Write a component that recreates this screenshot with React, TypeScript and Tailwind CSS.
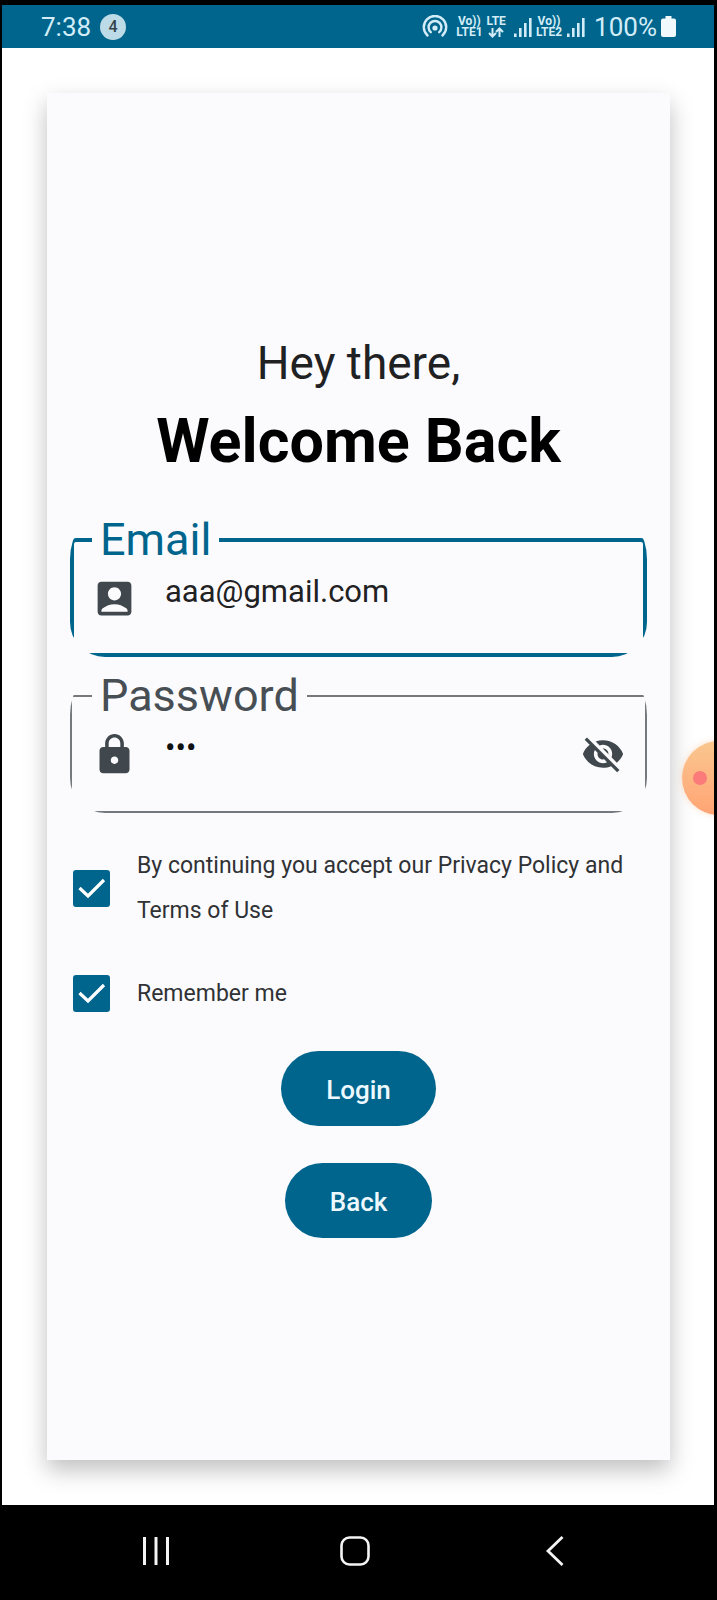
import { useState } from "react";
import type { ReactNode } from "react";

function SignalBars() {
  return (
    <svg viewBox="0 0 18 20" className="h-5 w-[18px]" fill="currentColor" aria-hidden="true">
      <rect x="0" y="16.500" width="2.600" height="3.500" />
      <rect x="5" y="11" width="2.600" height="9" />
      <rect x="10" y="6" width="2.600" height="14" />
      <rect x="15" y="1" width="2.600" height="19" />
    </svg>
  );
}

function VolteBadge({ line }: { line: string }) {
  return (
    <div className="flex flex-col items-center text-[12px] leading-[11px] font-bold">
      <span>Vo))</span>
      <span>{line}</span>
    </div>
  );
}

function StatusBar() {
  return (
    <header className="flex h-[43px] items-center justify-between bg-[#00658c] pr-[38px] pl-[39px] text-[#d3edf8]">
      <div className="flex items-center gap-[9px]">
        <span className="text-[26px] leading-8">7:38</span>
        <span className="flex size-[26px] items-center justify-center rounded-full bg-[#bddbe6] text-base font-medium text-[#33444c]">
          4
        </span>
      </div>
      <div className="flex items-center">
        <svg viewBox="0 0 26 24" className="mr-2 h-6 w-[26px]" fill="none" stroke="currentColor" strokeWidth="2.400" strokeLinecap="round" aria-hidden="true">
          <path d="M5.500 20.500A11.200 11.200 0 1 1 20.500 20.500" />
          <path d="M8.800 17.200A6.400 6.400 0 1 1 17.200 17.200" />
          <circle cx="13" cy="13" r="2.600" fill="currentColor" stroke="none" />
        </svg>
        <VolteBadge line="LTE1" />
        <div className="mr-2 ml-1 flex flex-col items-center text-[12px] leading-[11px] font-bold">
          <span>LTE</span>
          <svg viewBox="0 0 16 11" className="h-[11px] w-4" fill="none" stroke="currentColor" strokeWidth="2" aria-hidden="true">
            <path d="M4.500 1v8M1 6l3.500 3.500L8 6M11.500 10V2M8 5l3.500-3.500L15 5" />
          </svg>
        </div>
        <SignalBars />
        <div className="mr-[5px] ml-1">
          <VolteBadge line="LTE2" />
        </div>
        <SignalBars />
        <span className="ml-[9px] text-[26px] leading-8">100%</span>
        <svg viewBox="0 0 15 21" className="ml-1 h-[21px] w-[15px]" fill="#f1f9fd" aria-hidden="true">
          <path d="M4.500 0h6v2.500H13a2 2 0 0 1 2 2V19a2 2 0 0 1-2 2H2a2 2 0 0 1-2-2V4.500a2 2 0 0 1 2-2h2.500z" />
        </svg>
      </div>
    </header>
  );
}

function AccountIcon() {
  return (
    <svg viewBox="0 0 24 24" className="size-[45px] shrink-0" fill="#40484d" aria-hidden="true">
      <path d="M19 3H5c-1.110 0-2 .9-2 2v14c0 1.100.89 2 2 2h14c1.100 0 2-.9 2-2V5c0-1.100-.9-2-2-2zm-7 3c1.930 0 3.500 1.570 3.500 3.500S13.930 13 12 13s-3.500-1.570-3.500-3.500S10.070 6 12 6zm7 13H5v-.23c0-.62.28-1.200.76-1.580C7.470 15.820 9.640 15 12 15s4.530.82 6.240 2.190c.48.38.76.97.76 1.580V19z" />
    </svg>
  );
}

function LockIcon() {
  return (
    <svg viewBox="0 0 24 24" className="size-[45px] shrink-0" fill="#40484d" aria-hidden="true">
      <path d="M18 8h-1V6c0-2.760-2.240-5-5-5S7 3.240 7 6v2H6c-1.100 0-2 .9-2 2v10c0 1.100.9 2 2 2h12c1.100 0 2-.9 2-2V10c0-1.100-.9-2-2-2zm-6 9c-1.100 0-2-.9-2-2s.9-2 2-2 2 .9 2 2-.9 2-2 2zm3.100-9H8.900V6c0-1.710 1.390-3.100 3.100-3.100s3.100 1.390 3.100 3.100v2z" />
    </svg>
  );
}

function VisibilityOffIcon() {
  return (
    <svg viewBox="0 0 24 24" className="size-[44px]" fill="#40484d" aria-hidden="true">
      <path d="M12 7c2.760 0 5 2.240 5 5 0 .65-.13 1.260-.36 1.830l2.920 2.920c1.510-1.260 2.700-2.890 3.430-4.750-1.730-4.390-6-7.500-11-7.500-1.400 0-2.740.25-3.980.7l2.160 2.160C10.740 7.130 11.350 7 12 7zM2 4.270l2.280 2.280.46.46C3.080 8.300 1.780 10.020 1 12c1.730 4.390 6 7.500 11 7.500 1.550 0 3.030-.3 4.380-.84l.42.42L19.730 22 21 20.730 3.270 3 2 4.270zM7.530 9.800l1.550 1.550c-.05.21-.08.43-.08.65 0 1.660 1.340 3 3 3 .22 0 .44-.03.65-.08l1.550 1.550c-.67.33-1.410.53-2.200.53-2.760 0-5-2.240-5-5 0-.79.2-1.530.53-2.200zm4.310-.78l3.150 3.150.02-.16c0-1.660-1.340-3-3-3l-.17.01z" />
    </svg>
  );
}

function CheckRow({ id, children }: { id: string; children: ReactNode }) {
  return (
    <div className="flex items-center gap-[27px] pl-[3px]">
      <div className="relative size-[37px] shrink-0">
        <input
          id={id}
          type="checkbox"
          defaultChecked
          className="peer block size-[37px] appearance-none rounded-[3px] border-2 border-[#00658c] checked:bg-[#00658c]"
        />
        <svg
          viewBox="0 0 37 37"
          className="pointer-events-none absolute inset-0 hidden peer-checked:block"
          fill="none"
          stroke="#fff"
          strokeWidth="3.200"
          aria-hidden="true"
        >
          <path d="M6.500 18l8.500 8L31 10" />
        </svg>
      </div>
      <label htmlFor={id} className="text-[23px] leading-[45px] text-[#303235]">
        {children}
      </label>
    </div>
  );
}

function LoginForm() {
  const [visible, setVisible] = useState(false);
  return (
    <form className="flex flex-col" onSubmit={(e) => e.preventDefault()}>
      <div className="flex flex-col items-center gap-6 pt-6 text-center">
        <p className="text-[46px] leading-[48px] text-[#1f2123]">Hey there,</p>
        <h1 className="text-[61px] leading-[60px] font-bold text-black">Welcome Back</h1>
      </div>

      <div className="mt-[42px] overflow-hidden rounded-[35px_35px_35px_35px/46px_46px_35px_35px]">
        <fieldset className="h-[144px] min-w-0 rounded-[6px] border-4 border-[#00658c]">
          <legend className="ml-[18px] px-2 text-[45px] leading-[54px] text-[#00658c]">
            <label htmlFor="email">Email</label>
          </legend>
          <div className="flex items-start gap-7 pt-[9px] pr-5 pl-[18px]">
            <AccountIcon />
            <input
              id="email"
              type="email"
              defaultValue="aaa@gmail.com"
              className="h-8 min-w-0 flex-1 overflow-visible bg-transparent text-[31px] leading-8 text-[#1f2123] outline-none"
            />
          </div>
        </fieldset>
      </div>

      <div className="mt-3 overflow-hidden rounded-[35px_35px_35px_35px/46px_46px_35px_35px]">
        <fieldset className="h-[144px] min-w-0 rounded-[2px] border-2 border-[#75787d]">
          <legend className="ml-5 px-2 text-[45px] leading-[54px] text-[#484f54]">
            <label htmlFor="password">Password</label>
          </legend>
          <div className="flex items-start gap-7 pt-[9px] pr-5 pl-5">
            <LockIcon />
            <input
              id="password"
              type={visible ? "text" : "password"}
              defaultValue="aaa"
              className="h-8 min-w-0 flex-1 bg-transparent text-[31px] leading-8 text-[#111214] outline-none"
            />
            <button type="button" aria-label="Show password" onClick={() => setVisible(!visible)}>
              <VisibilityOffIcon />
            </button>
          </div>
        </fieldset>
      </div>

      <div className="mt-[30px] flex flex-col gap-[38px]">
        <CheckRow id="terms">By continuing you accept our Privacy Policy and Terms of Use</CheckRow>
        <CheckRow id="remember">Remember me</CheckRow>
      </div>

      <div className="mt-[35px] flex flex-col items-center gap-[37px]">
        <button type="submit" className="h-[75px] rounded-full bg-[#00658c] px-[45px] pt-[3px] text-[26px] font-medium text-[#eef9ff]">
          Login
        </button>
        <button type="button" className="h-[75px] rounded-full bg-[#00658c] px-[45px] pt-[3px] text-[26px] font-medium text-[#eef9ff]">
          Back
        </button>
      </div>
    </form>
  );
}

function NavigationBar() {
  return (
    <nav className="grid h-[95px] grid-cols-3 items-center bg-black pr-[59px] pb-1 pl-[54px] text-[#f4f4f4]">
      <button type="button" aria-label="Recent apps" className="flex justify-center">
        <svg viewBox="0 0 30 30" className="size-[30px]" fill="none" stroke="currentColor" strokeWidth="3">
          <path d="M3.500 1v28M15 1v28M26.500 1v28" />
        </svg>
      </button>
      <button type="button" aria-label="Home" className="flex justify-center">
        <svg viewBox="0 0 30 30" className="size-[30px]" fill="none" stroke="currentColor" strokeWidth="2.600">
          <rect x="1.500" y="1.500" width="27" height="27" rx="8" />
        </svg>
      </button>
      <button type="button" aria-label="Back" className="flex justify-center">
        <svg viewBox="0 0 30 30" className="size-[30px]" fill="none" stroke="currentColor" strokeWidth="2.800">
          <path d="M22.500 1L8 15l14.500 14" />
        </svg>
      </button>
    </nav>
  );
}

export default function App() {
  return (
    <div className="flex min-h-screen flex-col bg-black pt-[5px] pr-[3px] pl-[2px] font-['Roboto',sans-serif]">
      <StatusBar />
      <div className="relative flex flex-1 flex-col overflow-hidden bg-white p-[45px] pr-11">
        <main className="flex flex-1 flex-col justify-center bg-[#fbfbfe] px-[23px] shadow-[0_10px_22px_rgba(0,0,0,0.25)]">
          <LoginForm />
        </main>
        <div className="absolute top-1/2 -right-[42px] flex size-[74px] -translate-y-[36px] items-center rounded-full bg-linear-to-b from-[#fac78f] to-[#ffa374] pl-[11px] shadow-[0_0_6px_rgba(250,190,140,0.5)]">
          <span className="size-[14px] rounded-full bg-[#fb7a7a]" />
        </div>
      </div>
      <NavigationBar />
    </div>
  );
}
